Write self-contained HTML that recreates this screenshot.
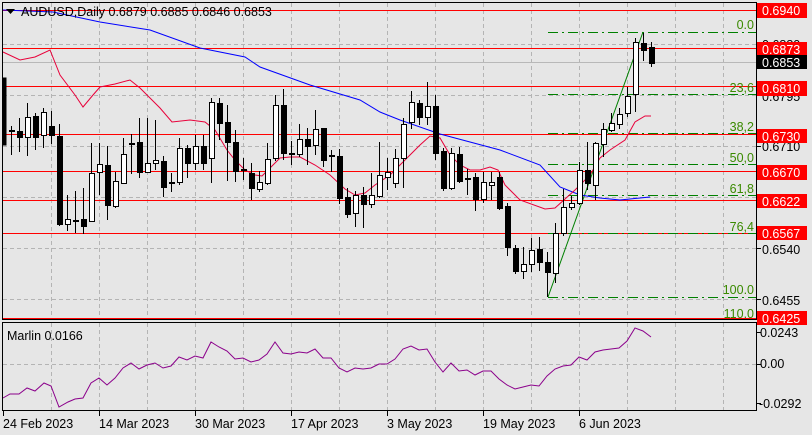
<!DOCTYPE html>
<html><head><meta charset="utf-8"><style>
html,body{margin:0;padding:0;background:#e6e6e6;}
svg{display:block;font-family:"Liberation Sans",sans-serif;}
</style></head><body>
<svg width="812" height="435" viewBox="0 0 812 435" xmlns="http://www.w3.org/2000/svg">
<rect width="812" height="435" fill="#e6e6e6"/>
<g stroke="#b4b4b4" stroke-dasharray="4,3" stroke-width="1">
<path d="M51.5 3V319M99.5 3V319M147.5 3V319M195.5 3V319M243.5 3V319M291.5 3V319M339.5 3V319M387.5 3V319M435.5 3V319M483.5 3V319M531.5 3V319M579.5 3V319M627.5 3V319M675.5 3V319M723.5 3V319"/>
<path d="M51.5 323V410M99.5 323V410M147.5 323V410M195.5 323V410M243.5 323V410M291.5 323V410M339.5 323V410M387.5 323V410M435.5 323V410M483.5 323V410M531.5 323V410M579.5 323V410M627.5 323V410M675.5 323V410M723.5 323V410"/>
<path d="M3 44.5H756M3 95.5H756M3 146.5H756M3 197.5H756M3 248.5H756M3 299.5H756M3 364.5H756"/>
</g>
<line x1="3" y1="62.5" x2="756" y2="62.5" stroke="#b8b8b8"/>
<g stroke="#ff0000" stroke-width="1">
<path d="M3 10.5H756M3 48.5H756M3 86.5H756M3 134.5H756M3 171.5H756M3 200.5H756M3 233.5H756M3 318.5H756"/>
</g>
<g stroke="#008000" stroke-width="1" stroke-dasharray="10,4,2,4" fill="none">
<path d="M548 32.5H756M548 94.5H756M548 133.5H756M548 164.5H756M548 195.5H756M548 233.5H756M548 297.5H756"/>
</g>
<line x1="548" y1="297" x2="643" y2="32" stroke="#008000" stroke-width="1"/>
<g fill="#3a8a00" font-size="12.5" text-anchor="end">
<text x="754" y="29">0.0</text><text x="754" y="92">23,6</text><text x="754" y="131">38,2</text><text x="754" y="162">50,0</text><text x="754" y="193">61,8</text><text x="754" y="231">76,4</text><text x="754" y="294">100.0</text><text x="754" y="318">110.0</text>
</g>
<polyline fill="none" stroke="#0000ff" stroke-width="1" points="3,10 53,12 100,22 150,30 200,48 245,57 260,67 310,85 360,100 380,112 400,120 440,134 500,150 540,165 560,187 580,195 600,198 620,200 650,197"/>
<polyline fill="none" stroke="#e8003a" stroke-width="1" points="3,52 20,60 35,57 50,50 60,75 75,95 83,107 93,95 100,87 115,84 130,80 140,88 160,108 172,122 190,120 205,122 215,130 227,150 235,160 245,170 255,175 262,176 270,168 280,158 290,157 300,157 315,165 330,175 345,189 355,195 365,193 375,185 390,175 405,160 420,145 430,136 440,138 450,155 460,165 470,170 480,170 490,167 498,170 505,185 520,200 545,209 555,208 575,190 590,175 600,158 610,150 625,140 635,122 645,116 651,116"/>
<g stroke="#000" stroke-width="1" shape-rendering="crispEdges">
<rect x="3" y="78" width="3" height="67" fill="#000"/>
<path d="M11.5 126V155M19.5 118V152M27.5 103V156M35.5 113V150M43.5 108V148M51.5 111V144M59.5 124V226M67.5 195V231M75.5 191V233M83.5 188V234M91.5 143V221M99.5 143V195M107.5 146V220M115.5 172V208M123.5 138V183M131.5 134V174M139.5 118V178M147.5 118V172M155.5 120V170M163.5 156V197M171.5 173V192M179.5 138V185M187.5 145V178M195.5 135V170M203.5 135V170M211.5 98V183M219.5 98V140M227.5 105V181M235.5 130V182M243.5 158V180M251.5 163V200M259.5 171V192M267.5 143V185M275.5 95V161M283.5 89V160M291.5 141V165M299.5 124V157M307.5 128V165M315.5 110V155M323.5 128V167M331.5 150V172M339.5 149V204M347.5 188V218M355.5 191V227M363.5 187V228M371.5 173V208M379.5 142V198M387.5 158V190M395.5 149V188M403.5 118V188M411.5 91V129M419.5 100V125M427.5 82V125M435.5 95V160M443.5 148V191M451.5 148V190M459.5 147V183M467.5 169V195M475.5 173V211M483.5 172V203M491.5 172V200M499.5 172V210M507.5 203V256M515.5 245V274M523.5 247V279M531.5 238V272M539.5 237V271M547.5 252V297M555.5 223V283M563.5 189V236M571.5 196V210M579.5 162V205M587.5 142V190M595.5 142V200M603.5 123V157M611.5 113V132M619.5 108V129M627.5 87V117M635.5 38V112M643.5 33V61M651.5 42V67"/>
<g fill="#000">
<rect x="9.5" y="130.5" width="5" height="1"/><rect x="17.5" y="131.5" width="5" height="6"/><rect x="33.5" y="116.5" width="5" height="21"/><rect x="49.5" y="126.5" width="5" height="9"/><rect x="57.5" y="136.5" width="5" height="88"/><rect x="73.5" y="220.5" width="5" height="1"/><rect x="81.5" y="219.5" width="5" height="7"/><rect x="105.5" y="165.5" width="5" height="40"/><rect x="129.5" y="143.5" width="5" height="1"/><rect x="137.5" y="142.5" width="5" height="30"/><rect x="161.5" y="161.5" width="5" height="26"/><rect x="169.5" y="182.5" width="5" height="1"/><rect x="185.5" y="148.5" width="5" height="15"/><rect x="201.5" y="146.5" width="5" height="17"/><rect x="217.5" y="103.5" width="5" height="20"/><rect x="225.5" y="122.5" width="5" height="20"/><rect x="233.5" y="142.5" width="5" height="29"/><rect x="241.5" y="169.5" width="5" height="1"/><rect x="249.5" y="173.5" width="5" height="15"/><rect x="281.5" y="105.5" width="5" height="48"/><rect x="289.5" y="153.5" width="5" height="1"/><rect x="305.5" y="139.5" width="5" height="7"/><rect x="321.5" y="128.5" width="5" height="32"/><rect x="329.5" y="155.5" width="5" height="1"/><rect x="337.5" y="156.5" width="5" height="42"/><rect x="345.5" y="197.5" width="5" height="17"/><rect x="361.5" y="195.5" width="5" height="9"/><rect x="417.5" y="103.5" width="5" height="14"/><rect x="433.5" y="106.5" width="5" height="47"/><rect x="441.5" y="151.5" width="5" height="37"/><rect x="457.5" y="154.5" width="5" height="27"/><rect x="465.5" y="178.5" width="5" height="1"/><rect x="473.5" y="177.5" width="5" height="22"/><rect x="497.5" y="177.5" width="5" height="31"/><rect x="505.5" y="206.5" width="5" height="41"/><rect x="513.5" y="248.5" width="5" height="23"/><rect x="537.5" y="249.5" width="5" height="13"/><rect x="545.5" y="262.5" width="5" height="10"/><rect x="585.5" y="170.5" width="5" height="13"/><rect x="641.5" y="43.5" width="5" height="7"/><rect x="649.5" y="47.5" width="5" height="16"/>
</g>
<g fill="#fff">
<rect x="25.5" y="117.5" width="5" height="20"/><rect x="41.5" y="112.5" width="5" height="23"/><rect x="65.5" y="219.5" width="5" height="5"/><rect x="89.5" y="173.5" width="5" height="48"/><rect x="97.5" y="164.5" width="5" height="8"/><rect x="113.5" y="181.5" width="5" height="25"/><rect x="121.5" y="154.5" width="5" height="29"/><rect x="145.5" y="163.5" width="5" height="9"/><rect x="153.5" y="160.5" width="5" height="3"/><rect x="177.5" y="148.5" width="5" height="34"/><rect x="193.5" y="146.5" width="5" height="17"/><rect x="209.5" y="102.5" width="5" height="56"/><rect x="257.5" y="182.5" width="5" height="7"/><rect x="265.5" y="159.5" width="5" height="24"/><rect x="273.5" y="105.5" width="5" height="53"/><rect x="297.5" y="139.5" width="5" height="15"/><rect x="313.5" y="129.5" width="5" height="16"/><rect x="353.5" y="195.5" width="5" height="18"/><rect x="369.5" y="195.5" width="5" height="9"/><rect x="377.5" y="175.5" width="5" height="21"/><rect x="385.5" y="172.5" width="5" height="5"/><rect x="393.5" y="158.5" width="5" height="25"/><rect x="401.5" y="124.5" width="5" height="34"/><rect x="409.5" y="102.5" width="5" height="20"/><rect x="425.5" y="106.5" width="5" height="11"/><rect x="449.5" y="153.5" width="5" height="35"/><rect x="481.5" y="182.5" width="5" height="17"/><rect x="489.5" y="182.5" width="5" height="3"/><rect x="521.5" y="264.5" width="5" height="7"/><rect x="529.5" y="250.5" width="5" height="14"/><rect x="553.5" y="233.5" width="5" height="40"/><rect x="561.5" y="207.5" width="5" height="26"/><rect x="569.5" y="203.5" width="5" height="4"/><rect x="577.5" y="170.5" width="5" height="33"/><rect x="593.5" y="143.5" width="5" height="42"/><rect x="601.5" y="129.5" width="5" height="15"/><rect x="609.5" y="123.5" width="5" height="7"/><rect x="617.5" y="114.5" width="5" height="10"/><rect x="625.5" y="96.5" width="5" height="17"/><rect x="633.5" y="42.5" width="5" height="52"/>
</g>
</g>
<polyline fill="none" stroke="#8b008b" stroke-width="1" points="3,398 10,394 19,394 27,388 35,391 44,383 51,386 59,407 68,402 75,399 83,398 91,383 99,378 107,385 115,378 123,368 131,363 139,369 147,365 155,363 163,368 171,366 179,357 187,360 195,356 203,358 211,342 219,347 227,351 235,359 243,358 251,362 259,360 267,354 275,342 283,353 291,354 299,352 307,353 315,349 323,358 331,358 339,368 347,372 355,368 363,369 371,368 379,364 387,364 395,359 403,349 411,346 419,350 427,349 435,362 443,372 451,363 459,371 467,370 475,375 483,371 491,371 499,379 507,385 515,389 523,387 531,385 539,386 547,376 555,369 563,366 571,365 579,357 587,360 595,352 603,350 611,349 619,348 627,341 635,328 643,331 651,337"/>
<rect x="2.5" y="2.5" width="754" height="317" fill="none" stroke="#000"/>
<rect x="2.5" y="322.5" width="754" height="88" fill="none" stroke="#000"/>
<g stroke="#000"><path d="M3.5 411V416M99.5 411V416M195.5 411V416M291.5 411V416M387.5 411V416M483.5 411V416M579.5 411V416M757 44.5H761M757 95.5H761M757 146.5H761M757 248.5H761M757 299.5H761M757 332.5H761M757 364.5H761M757 403.5H761"/></g>
<path d="M6 9H15L10.5 14Z" fill="#000"/>
<text x="21" y="16" font-size="12.5" fill="#000">AUDUSD,Daily  0.6879 0.6885 0.6846 0.6853</text>
<text x="7" y="340" font-size="12.5" fill="#000">Marlin 0.0166</text>
<g font-size="12.5" fill="#000">
<text x="762" y="49">0.6880</text><text x="762" y="101">0.6795</text><text x="762" y="151">0.6710</text><text x="762" y="254">0.6540</text><text x="762" y="305">0.6455</text>
<text x="760" y="337">0.0243</text><text x="760" y="368">0.00</text><text x="759" y="408">-0.0292</text>
</g>
<g fill="#ff0000">
<rect x="757" y="3" width="50" height="15"/><rect x="757" y="42" width="50" height="14"/><rect x="757" y="81" width="50" height="15"/><rect x="757" y="129" width="50" height="14"/><rect x="757" y="165" width="50" height="15"/><rect x="757" y="194" width="50" height="14"/><rect x="757" y="226" width="50" height="14"/><rect x="757" y="311" width="50" height="14"/>
</g>
<rect x="757" y="55" width="50" height="14" fill="#000"/>
<g font-size="12.5" fill="#fff">
<text x="762" y="15">0.6940</text><text x="762" y="54">0.6873</text><text x="762" y="67">0.6853</text><text x="762" y="93">0.6810</text><text x="762" y="141">0.6730</text><text x="762" y="177">0.6670</text><text x="762" y="206">0.6622</text><text x="762" y="238">0.6567</text><text x="762" y="323">0.6425</text>
</g>
<g font-size="12.5" fill="#000">
<text x="3" y="428">24 Feb 2023</text><text x="99" y="428">14 Mar 2023</text><text x="195" y="428">30 Mar 2023</text><text x="291" y="428">17 Apr 2023</text><text x="387" y="428">3 May 2023</text><text x="483" y="428">19 May 2023</text><text x="579" y="428">6 Jun 2023</text>
</g>
</svg>
</body></html>
